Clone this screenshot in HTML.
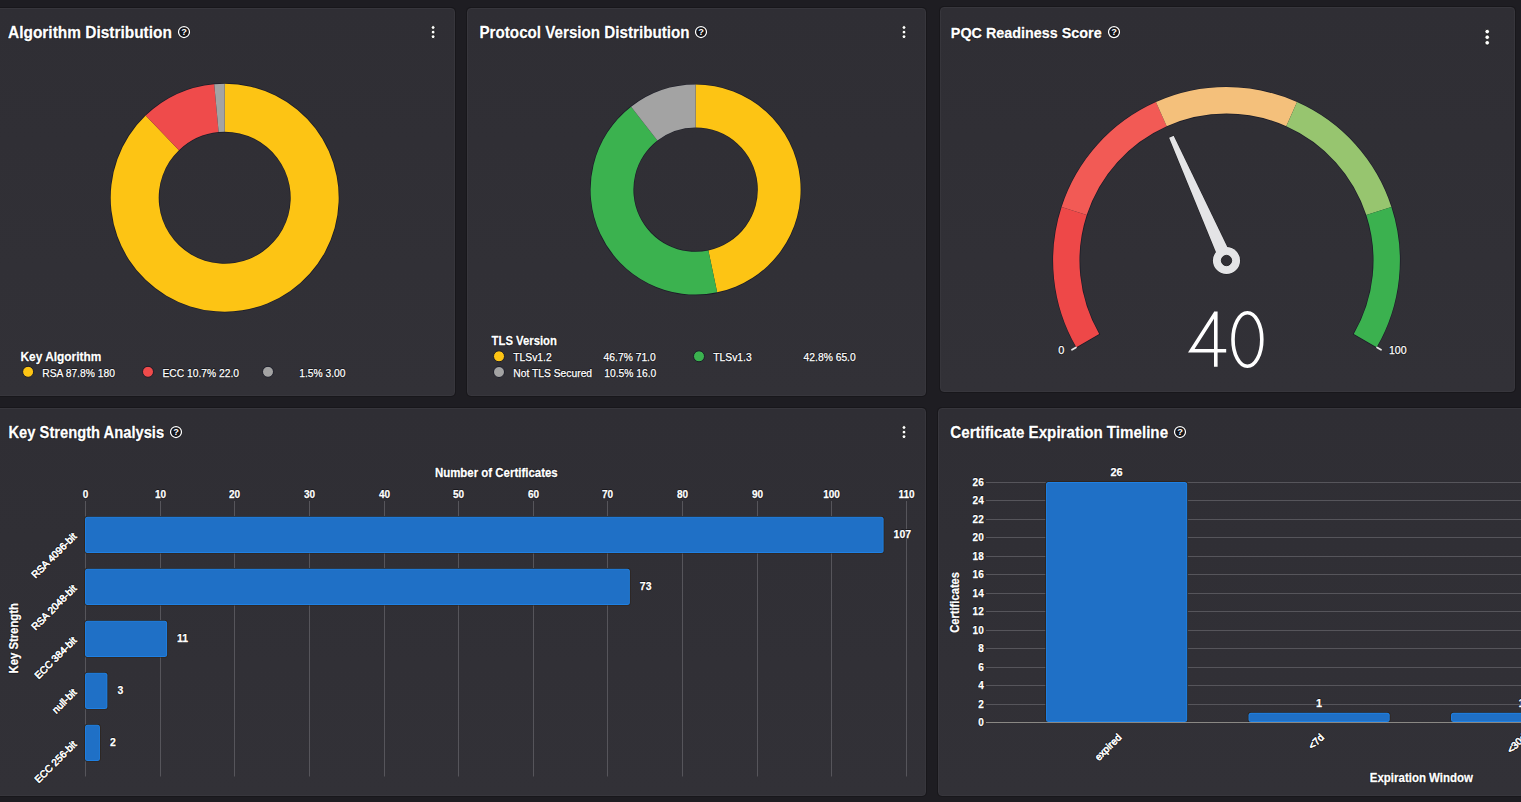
<!DOCTYPE html>
<html><head><meta charset="utf-8"><style>
html,body{margin:0;padding:0;width:1521px;height:802px;overflow:hidden;background:#1e1d22;}
.p{position:absolute;box-sizing:border-box;background:linear-gradient(#2f2e34,#323137);border:1px solid #37363c;border-radius:4px;box-shadow:0 0 0 1px #18171b;}
svg{position:absolute;left:0;top:0;}
text{font-family:"Liberation Sans",sans-serif;stroke:#fff;stroke-width:0.25px;}
text.halo{fill:#141418;stroke:#141418;stroke-width:1.6px;stroke-linejoin:round;}
text.r{stroke-width:0.6px;}
text.halo.r{stroke-width:2px;}
text.q{stroke:none;}
text.halo.q{display:none;}
</style></head><body>
<div class="p" style="left:-10px;top:8px;width:465px;height:388px"></div>
<div class="p" style="left:467px;top:8px;width:459px;height:388px"></div>
<div class="p" style="left:940px;top:7px;width:575px;height:385px"></div>
<div class="p" style="left:-10px;top:408px;width:936px;height:388px"></div>
<div class="p" style="left:938px;top:408px;width:620px;height:388px"></div>
<svg width="1521" height="802" viewBox="0 0 1521 802">
<text transform="translate(8,38) scale(1,1.07)" class="halo " font-size="15.46" font-weight="bold">Algorithm Distribution</text><text transform="translate(8,38) scale(1,1.07)" class="" fill="#fff" font-size="15.46" font-weight="bold">Algorithm Distribution</text>
<circle cx="184" cy="32" r="6.3" fill="#141418"/><circle cx="184" cy="32" r="5.5" fill="#141418" stroke="#fff" stroke-width="1.25"/><text x="184" y="35.3" font-size="9.3" font-weight="bold" fill="#fff" text-anchor="middle" style="stroke:none">?</text>
<circle cx="433.1" cy="27.5" r="1.9" fill="#fff" stroke="#111" stroke-width="0.8"/><circle cx="433.1" cy="32.1" r="1.9" fill="#fff" stroke="#111" stroke-width="0.8"/><circle cx="433.1" cy="36.7" r="1.9" fill="#fff" stroke="#111" stroke-width="0.8"/>
<circle cx="224.7" cy="197.7" r="90" fill="none" stroke="#1b1c28" stroke-width="49.4"/>
<path d="M224.7,83.7 A114,114 0 1 1 145.65,115.56 L178.93,150.15 A66,66 0 1 0 224.7,131.7 Z" fill="#fdc414"/>
<path d="M145.65,115.56 A114,114 0 0 1 214.23,84.18 L218.64,131.98 A66,66 0 0 0 178.93,150.15 Z" fill="#ef4b4b"/>
<path d="M214.23,84.18 A114,114 0 0 1 224.7,83.7 L224.7,131.7 A66,66 0 0 0 218.64,131.98 Z" fill="#a3a3a3"/>
<text transform="translate(20.5,361) scale(1,1.04)" class="halo " font-size="11.9" font-weight="bold">Key Algorithm</text><text transform="translate(20.5,361) scale(1,1.04)" class="" fill="#fff" font-size="11.9" font-weight="bold">Key Algorithm</text>
<circle cx="28.1" cy="371.8" r="5.5" fill="#fdc414" stroke="#1b1c28" stroke-width="1"/>
<text transform="translate(42.2,376.6)" class="halo " font-size="10.3">RSA 87.8% 180</text><text transform="translate(42.2,376.6)" class="" fill="#fff" font-size="10.3">RSA 87.8% 180</text>
<circle cx="148" cy="371.8" r="5.5" fill="#ef4b4b" stroke="#1b1c28" stroke-width="1"/>
<text transform="translate(162.4,376.6)" class="halo " font-size="10.3">ECC 10.7% 22.0</text><text transform="translate(162.4,376.6)" class="" fill="#fff" font-size="10.3">ECC 10.7% 22.0</text>
<circle cx="268" cy="371.8" r="5.5" fill="#a3a3a3" stroke="#1b1c28" stroke-width="1"/>
<text transform="translate(299.2,376.6)" class="halo " font-size="10.3">1.5% 3.00</text><text transform="translate(299.2,376.6)" class="" fill="#fff" font-size="10.3">1.5% 3.00</text>
<text transform="translate(479.5,38) scale(1,1.07)" class="halo " font-size="15.18" font-weight="bold">Protocol Version Distribution</text><text transform="translate(479.5,38) scale(1,1.07)" class="" fill="#fff" font-size="15.18" font-weight="bold">Protocol Version Distribution</text>
<circle cx="701" cy="32" r="6.3" fill="#141418"/><circle cx="701" cy="32" r="5.5" fill="#141418" stroke="#fff" stroke-width="1.25"/><text x="701" y="35.3" font-size="9.3" font-weight="bold" fill="#fff" text-anchor="middle" style="stroke:none">?</text>
<circle cx="904" cy="27.5" r="1.9" fill="#fff" stroke="#111" stroke-width="0.8"/><circle cx="904" cy="32.1" r="1.9" fill="#fff" stroke="#111" stroke-width="0.8"/><circle cx="904" cy="36.7" r="1.9" fill="#fff" stroke="#111" stroke-width="0.8"/>
<circle cx="695.6" cy="189.6" r="83.6" fill="none" stroke="#1b1c28" stroke-width="44.2"/>
<path d="M695.6,84.6 A105,105 0 0 1 717.15,292.37 L708.36,250.48 A62.2,62.2 0 0 0 695.6,127.4 Z" fill="#fdc414"/>
<path d="M717.15,292.37 A105,105 0 0 1 631.11,106.74 L657.4,140.52 A62.2,62.2 0 0 0 708.36,250.48 Z" fill="#3bb24f"/>
<path d="M631.11,106.74 A105,105 0 0 1 695.6,84.6 L695.6,127.4 A62.2,62.2 0 0 0 657.4,140.52 Z" fill="#a3a3a3"/>
<text transform="translate(491.6,344.8) scale(1,1.08)" class="halo " font-size="11.3" font-weight="bold">TLS Version</text><text transform="translate(491.6,344.8) scale(1,1.08)" class="" fill="#fff" font-size="11.3" font-weight="bold">TLS Version</text>
<circle cx="499" cy="356.3" r="5.5" fill="#fdc414" stroke="#1b1c28" stroke-width="1"/>
<text transform="translate(513.3,360.9)" class="halo " font-size="10.3">TLSv1.2</text><text transform="translate(513.3,360.9)" class="" fill="#fff" font-size="10.3">TLSv1.2</text>
<text transform="translate(603.6,360.9)" class="halo " font-size="10.3">46.7% 71.0</text><text transform="translate(603.6,360.9)" class="" fill="#fff" font-size="10.3">46.7% 71.0</text>
<circle cx="699" cy="356.3" r="5.5" fill="#3bb24f" stroke="#1b1c28" stroke-width="1"/>
<text transform="translate(713.3,360.9)" class="halo " font-size="10.3">TLSv1.3</text><text transform="translate(713.3,360.9)" class="" fill="#fff" font-size="10.3">TLSv1.3</text>
<text transform="translate(803.6,360.9)" class="halo " font-size="10.3">42.8% 65.0</text><text transform="translate(803.6,360.9)" class="" fill="#fff" font-size="10.3">42.8% 65.0</text>
<circle cx="499" cy="372" r="5.5" fill="#a3a3a3" stroke="#1b1c28" stroke-width="1"/>
<text transform="translate(513.3,376.6)" class="halo " font-size="10.3">Not TLS Secured</text><text transform="translate(513.3,376.6)" class="" fill="#fff" font-size="10.3">Not TLS Secured</text>
<text transform="translate(604.2,376.6)" class="halo " font-size="10.3">10.5% 16.0</text><text transform="translate(604.2,376.6)" class="" fill="#fff" font-size="10.3">10.5% 16.0</text>
<text transform="translate(950.8,37.6) scale(1,1.07)" class="halo " font-size="14.37" font-weight="bold">PQC Readiness Score</text><text transform="translate(950.8,37.6) scale(1,1.07)" class="" fill="#fff" font-size="14.37" font-weight="bold">PQC Readiness Score</text>
<circle cx="1114" cy="32.1" r="6.3" fill="#141418"/><circle cx="1114" cy="32.1" r="5.5" fill="#141418" stroke="#fff" stroke-width="1.25"/><text x="1114" y="35.4" font-size="9.3" font-weight="bold" fill="#fff" text-anchor="middle" style="stroke:none">?</text>
<circle cx="1487.2" cy="31.6" r="2.3" fill="#fff" stroke="#111" stroke-width="0.8"/><circle cx="1487.2" cy="37.2" r="2.3" fill="#fff" stroke="#111" stroke-width="0.8"/><circle cx="1487.2" cy="42.8" r="2.3" fill="#fff" stroke="#111" stroke-width="0.8"/>
<path d="M1076.18,348.34 A174.1,174.1 0 1 1 1376.82,348.34 L1352.81,334.31 A146.3,146.3 0 1 0 1100.19,334.31 Z" fill="#1b1c28"/>
<path d="M1076.33,347.2 A173.4,173.4 0 0 1 1061.59,206.92 L1086.69,215.07 A147,147 0 0 0 1099.19,334 Z" fill="#ee4848"/>
<path d="M1061.59,206.92 A173.4,173.4 0 0 1 1155.97,102.09 L1166.71,126.21 A147,147 0 0 0 1086.69,215.07 Z" fill="#f25a55"/>
<path d="M1155.97,102.09 A173.4,173.4 0 0 1 1297.03,102.09 L1286.29,126.21 A147,147 0 0 0 1166.71,126.21 Z" fill="#f4c07b"/>
<path d="M1297.03,102.09 A173.4,173.4 0 0 1 1391.41,206.92 L1366.31,215.07 A147,147 0 0 0 1286.29,126.21 Z" fill="#97c56f"/>
<path d="M1391.41,206.92 A173.4,173.4 0 0 1 1376.67,347.2 L1353.81,334 A147,147 0 0 0 1366.31,215.07 Z" fill="#3bb14f"/>
<line x1="1075.9" y1="347.45" x2="1072" y2="349.7" stroke="#e8e8e8" stroke-width="1.8" stroke-linecap="round"/>
<line x1="1377.1" y1="347.45" x2="1381" y2="349.7" stroke="#e8e8e8" stroke-width="1.8" stroke-linecap="round"/>
<path d="M1232.53,257.82 L1173.67,135.7 L1169.1,137.73 L1220.47,263.18 Z" fill="#18181c" stroke="#18181c" stroke-width="1"/>
<circle cx="1226.5" cy="260.5" r="13.6" fill="#18181c" stroke="#18181c" stroke-width="1"/>
<path d="M1232.53,257.82 L1173.67,135.7 L1169.1,137.73 L1220.47,263.18 Z" fill="#e4e4e6"/>
<circle cx="1226.5" cy="260.5" r="13.6" fill="#e4e4e6"/>
<circle cx="1226.5" cy="260.5" r="5.2" fill="#302f35" stroke="#18181c" stroke-width="0.8"/>
<path d="M1215.8,312.5 L1191.3,350.7 L1226.2,350.7 M1215.8,311.5 L1215.8,366.8" fill="none" stroke="#fff" stroke-width="3.6" stroke-linejoin="miter"/>
<ellipse cx="1247.4" cy="339.5" rx="14.4" ry="26.8" fill="none" stroke="#fff" stroke-width="3.6"/>
<text transform="translate(1061.3,353.8)" class="halo " font-size="11" text-anchor="middle">0</text><text transform="translate(1061.3,353.8)" class="" fill="#fff" font-size="11" text-anchor="middle">0</text>
<text transform="translate(1397.8,353.8)" class="halo " font-size="10.6" text-anchor="middle">100</text><text transform="translate(1397.8,353.8)" class="" fill="#fff" font-size="10.6" text-anchor="middle">100</text>
<text transform="translate(8.5,437.6) scale(1,1.07)" class="halo " font-size="14.72" font-weight="bold">Key Strength Analysis</text><text transform="translate(8.5,437.6) scale(1,1.07)" class="" fill="#fff" font-size="14.72" font-weight="bold">Key Strength Analysis</text>
<circle cx="176" cy="432" r="6.3" fill="#141418"/><circle cx="176" cy="432" r="5.5" fill="#141418" stroke="#fff" stroke-width="1.25"/><text x="176" y="435.3" font-size="9.3" font-weight="bold" fill="#fff" text-anchor="middle" style="stroke:none">?</text>
<circle cx="904" cy="427.5" r="1.9" fill="#fff" stroke="#111" stroke-width="0.8"/><circle cx="904" cy="432.1" r="1.9" fill="#fff" stroke="#111" stroke-width="0.8"/><circle cx="904" cy="436.7" r="1.9" fill="#fff" stroke="#111" stroke-width="0.8"/>
<line x1="85.5" y1="501" x2="85.5" y2="776.5" stroke="#56555b" stroke-width="1"/>
<text transform="translate(85.5,498.3)" class="halo " font-size="10" font-weight="bold" text-anchor="middle">0</text><text transform="translate(85.5,498.3)" class="" fill="#fff" font-size="10" font-weight="bold" text-anchor="middle">0</text>
<line x1="160.5" y1="501" x2="160.5" y2="776.5" stroke="#56555b" stroke-width="1"/>
<text transform="translate(160.5,498.3)" class="halo " font-size="10" font-weight="bold" text-anchor="middle">10</text><text transform="translate(160.5,498.3)" class="" fill="#fff" font-size="10" font-weight="bold" text-anchor="middle">10</text>
<line x1="234.5" y1="501" x2="234.5" y2="776.5" stroke="#56555b" stroke-width="1"/>
<text transform="translate(234.5,498.3)" class="halo " font-size="10" font-weight="bold" text-anchor="middle">20</text><text transform="translate(234.5,498.3)" class="" fill="#fff" font-size="10" font-weight="bold" text-anchor="middle">20</text>
<line x1="309.5" y1="501" x2="309.5" y2="776.5" stroke="#56555b" stroke-width="1"/>
<text transform="translate(309.5,498.3)" class="halo " font-size="10" font-weight="bold" text-anchor="middle">30</text><text transform="translate(309.5,498.3)" class="" fill="#fff" font-size="10" font-weight="bold" text-anchor="middle">30</text>
<line x1="384.5" y1="501" x2="384.5" y2="776.5" stroke="#56555b" stroke-width="1"/>
<text transform="translate(384.5,498.3)" class="halo " font-size="10" font-weight="bold" text-anchor="middle">40</text><text transform="translate(384.5,498.3)" class="" fill="#fff" font-size="10" font-weight="bold" text-anchor="middle">40</text>
<line x1="458.5" y1="501" x2="458.5" y2="776.5" stroke="#56555b" stroke-width="1"/>
<text transform="translate(458.5,498.3)" class="halo " font-size="10" font-weight="bold" text-anchor="middle">50</text><text transform="translate(458.5,498.3)" class="" fill="#fff" font-size="10" font-weight="bold" text-anchor="middle">50</text>
<line x1="533.5" y1="501" x2="533.5" y2="776.5" stroke="#56555b" stroke-width="1"/>
<text transform="translate(533.5,498.3)" class="halo " font-size="10" font-weight="bold" text-anchor="middle">60</text><text transform="translate(533.5,498.3)" class="" fill="#fff" font-size="10" font-weight="bold" text-anchor="middle">60</text>
<line x1="607.5" y1="501" x2="607.5" y2="776.5" stroke="#56555b" stroke-width="1"/>
<text transform="translate(607.5,498.3)" class="halo " font-size="10" font-weight="bold" text-anchor="middle">70</text><text transform="translate(607.5,498.3)" class="" fill="#fff" font-size="10" font-weight="bold" text-anchor="middle">70</text>
<line x1="682.5" y1="501" x2="682.5" y2="776.5" stroke="#56555b" stroke-width="1"/>
<text transform="translate(682.5,498.3)" class="halo " font-size="10" font-weight="bold" text-anchor="middle">80</text><text transform="translate(682.5,498.3)" class="" fill="#fff" font-size="10" font-weight="bold" text-anchor="middle">80</text>
<line x1="757.5" y1="501" x2="757.5" y2="776.5" stroke="#56555b" stroke-width="1"/>
<text transform="translate(757.5,498.3)" class="halo " font-size="10" font-weight="bold" text-anchor="middle">90</text><text transform="translate(757.5,498.3)" class="" fill="#fff" font-size="10" font-weight="bold" text-anchor="middle">90</text>
<line x1="831.5" y1="501" x2="831.5" y2="776.5" stroke="#56555b" stroke-width="1"/>
<text transform="translate(831.5,498.3)" class="halo " font-size="10" font-weight="bold" text-anchor="middle">100</text><text transform="translate(831.5,498.3)" class="" fill="#fff" font-size="10" font-weight="bold" text-anchor="middle">100</text>
<line x1="906.5" y1="501" x2="906.5" y2="776.5" stroke="#56555b" stroke-width="1"/>
<text transform="translate(906.5,498.3)" class="halo " font-size="10" font-weight="bold" text-anchor="middle">110</text><text transform="translate(906.5,498.3)" class="" fill="#fff" font-size="10" font-weight="bold" text-anchor="middle">110</text>
<text transform="translate(496.3,476.8) scale(1,1.12)" class="halo " font-size="11.47" font-weight="bold" text-anchor="middle">Number of Certificates</text><text transform="translate(496.3,476.8) scale(1,1.12)" class="" fill="#fff" font-size="11.47" font-weight="bold" text-anchor="middle">Number of Certificates</text>
<rect x="84.3" y="516" width="800.01" height="37.6" rx="3.2" fill="#2e2218"/><rect x="85" y="516.7" width="798.61" height="36.2" rx="2.5" fill="#1f80e3"/><rect x="85.9" y="517.6" width="796.81" height="34.4" rx="1.6" fill="#1f70c6"/>
<text transform="translate(893.61,538.3)" class="halo " font-size="10.5" font-weight="bold">107</text><text transform="translate(893.61,538.3)" class="" fill="#fff" font-size="10.5" font-weight="bold">107</text>
<text transform="translate(77.2,537.1) rotate(-45)" class="halo r" font-size="10" text-anchor="end">RSA 4096-bit</text><text transform="translate(77.2,537.1) rotate(-45)" class="r" fill="#fff" font-size="10" text-anchor="end">RSA 4096-bit</text>
<rect x="84.3" y="568" width="546.25" height="37.6" rx="3.2" fill="#2e2218"/><rect x="85" y="568.7" width="544.85" height="36.2" rx="2.5" fill="#1f80e3"/><rect x="85.9" y="569.6" width="543.05" height="34.4" rx="1.6" fill="#1f70c6"/>
<text transform="translate(639.85,590.3)" class="halo " font-size="10.5" font-weight="bold">73</text><text transform="translate(639.85,590.3)" class="" fill="#fff" font-size="10.5" font-weight="bold">73</text>
<text transform="translate(77.2,589.1) rotate(-45)" class="halo r" font-size="10" text-anchor="end">RSA 2048-bit</text><text transform="translate(77.2,589.1) rotate(-45)" class="r" fill="#fff" font-size="10" text-anchor="end">RSA 2048-bit</text>
<rect x="84.3" y="620" width="83.5" height="37.6" rx="3.2" fill="#2e2218"/><rect x="85" y="620.7" width="82.1" height="36.2" rx="2.5" fill="#1f80e3"/><rect x="85.9" y="621.6" width="80.3" height="34.4" rx="1.6" fill="#1f70c6"/>
<text transform="translate(177.1,642.3)" class="halo " font-size="10.5" font-weight="bold">11</text><text transform="translate(177.1,642.3)" class="" fill="#fff" font-size="10.5" font-weight="bold">11</text>
<text transform="translate(77.2,641.1) rotate(-45)" class="halo r" font-size="10" text-anchor="end">ECC 384-bit</text><text transform="translate(77.2,641.1) rotate(-45)" class="r" fill="#fff" font-size="10" text-anchor="end">ECC 384-bit</text>
<rect x="84.3" y="672" width="23.79" height="37.6" rx="3.2" fill="#2e2218"/><rect x="85" y="672.7" width="22.39" height="36.2" rx="2.5" fill="#1f80e3"/><rect x="85.9" y="673.6" width="20.59" height="34.4" rx="1.6" fill="#1f70c6"/>
<text transform="translate(117.39,694.3)" class="halo " font-size="10.5" font-weight="bold">3</text><text transform="translate(117.39,694.3)" class="" fill="#fff" font-size="10.5" font-weight="bold">3</text>
<text transform="translate(77.2,693.1) rotate(-45)" class="halo r" font-size="10" text-anchor="end">null-bit</text><text transform="translate(77.2,693.1) rotate(-45)" class="r" fill="#fff" font-size="10" text-anchor="end">null-bit</text>
<rect x="84.3" y="724" width="16.33" height="37.6" rx="3.2" fill="#2e2218"/><rect x="85" y="724.7" width="14.93" height="36.2" rx="2.5" fill="#1f80e3"/><rect x="85.9" y="725.6" width="13.13" height="34.4" rx="1.6" fill="#1f70c6"/>
<text transform="translate(109.93,746.3)" class="halo " font-size="10.5" font-weight="bold">2</text><text transform="translate(109.93,746.3)" class="" fill="#fff" font-size="10.5" font-weight="bold">2</text>
<text transform="translate(77.2,745.1) rotate(-45)" class="halo r" font-size="10" text-anchor="end">ECC 256-bit</text><text transform="translate(77.2,745.1) rotate(-45)" class="r" fill="#fff" font-size="10" text-anchor="end">ECC 256-bit</text>
<text transform="translate(18,638.3) rotate(-90) scale(1,1.2)" class="halo " font-size="11.3" font-weight="bold" text-anchor="middle">Key Strength</text><text transform="translate(18,638.3) rotate(-90) scale(1,1.2)" class="" fill="#fff" font-size="11.3" font-weight="bold" text-anchor="middle">Key Strength</text>
<text transform="translate(950.3,438) scale(1,1.07)" class="halo " font-size="15.17" font-weight="bold">Certificate Expiration Timeline</text><text transform="translate(950.3,438) scale(1,1.07)" class="" fill="#fff" font-size="15.17" font-weight="bold">Certificate Expiration Timeline</text>
<circle cx="1180" cy="432" r="6.3" fill="#141418"/><circle cx="1180" cy="432" r="5.5" fill="#141418" stroke="#fff" stroke-width="1.25"/><text x="1180" y="435.3" font-size="9.3" font-weight="bold" fill="#fff" text-anchor="middle" style="stroke:none">?</text>
<line x1="986" y1="722.5" x2="1521" y2="722.5" stroke="#56555b" stroke-width="1"/>
<text transform="translate(983.7,726)" class="halo " font-size="10" font-weight="bold" text-anchor="end">0</text><text transform="translate(983.7,726)" class="" fill="#fff" font-size="10" font-weight="bold" text-anchor="end">0</text>
<line x1="986" y1="704.5" x2="1521" y2="704.5" stroke="#56555b" stroke-width="1"/>
<text transform="translate(983.7,707.54)" class="halo " font-size="10" font-weight="bold" text-anchor="end">2</text><text transform="translate(983.7,707.54)" class="" fill="#fff" font-size="10" font-weight="bold" text-anchor="end">2</text>
<line x1="986" y1="685.5" x2="1521" y2="685.5" stroke="#56555b" stroke-width="1"/>
<text transform="translate(983.7,689.08)" class="halo " font-size="10" font-weight="bold" text-anchor="end">4</text><text transform="translate(983.7,689.08)" class="" fill="#fff" font-size="10" font-weight="bold" text-anchor="end">4</text>
<line x1="986" y1="667.5" x2="1521" y2="667.5" stroke="#56555b" stroke-width="1"/>
<text transform="translate(983.7,670.62)" class="halo " font-size="10" font-weight="bold" text-anchor="end">6</text><text transform="translate(983.7,670.62)" class="" fill="#fff" font-size="10" font-weight="bold" text-anchor="end">6</text>
<line x1="986" y1="648.5" x2="1521" y2="648.5" stroke="#56555b" stroke-width="1"/>
<text transform="translate(983.7,652.15)" class="halo " font-size="10" font-weight="bold" text-anchor="end">8</text><text transform="translate(983.7,652.15)" class="" fill="#fff" font-size="10" font-weight="bold" text-anchor="end">8</text>
<line x1="986" y1="630.5" x2="1521" y2="630.5" stroke="#56555b" stroke-width="1"/>
<text transform="translate(983.7,633.69)" class="halo " font-size="10" font-weight="bold" text-anchor="end">10</text><text transform="translate(983.7,633.69)" class="" fill="#fff" font-size="10" font-weight="bold" text-anchor="end">10</text>
<line x1="986" y1="611.5" x2="1521" y2="611.5" stroke="#56555b" stroke-width="1"/>
<text transform="translate(983.7,615.23)" class="halo " font-size="10" font-weight="bold" text-anchor="end">12</text><text transform="translate(983.7,615.23)" class="" fill="#fff" font-size="10" font-weight="bold" text-anchor="end">12</text>
<line x1="986" y1="593.5" x2="1521" y2="593.5" stroke="#56555b" stroke-width="1"/>
<text transform="translate(983.7,596.77)" class="halo " font-size="10" font-weight="bold" text-anchor="end">14</text><text transform="translate(983.7,596.77)" class="" fill="#fff" font-size="10" font-weight="bold" text-anchor="end">14</text>
<line x1="986" y1="574.5" x2="1521" y2="574.5" stroke="#56555b" stroke-width="1"/>
<text transform="translate(983.7,578.31)" class="halo " font-size="10" font-weight="bold" text-anchor="end">16</text><text transform="translate(983.7,578.31)" class="" fill="#fff" font-size="10" font-weight="bold" text-anchor="end">16</text>
<line x1="986" y1="556.5" x2="1521" y2="556.5" stroke="#56555b" stroke-width="1"/>
<text transform="translate(983.7,559.85)" class="halo " font-size="10" font-weight="bold" text-anchor="end">18</text><text transform="translate(983.7,559.85)" class="" fill="#fff" font-size="10" font-weight="bold" text-anchor="end">18</text>
<line x1="986" y1="537.5" x2="1521" y2="537.5" stroke="#56555b" stroke-width="1"/>
<text transform="translate(983.7,541.38)" class="halo " font-size="10" font-weight="bold" text-anchor="end">20</text><text transform="translate(983.7,541.38)" class="" fill="#fff" font-size="10" font-weight="bold" text-anchor="end">20</text>
<line x1="986" y1="519.5" x2="1521" y2="519.5" stroke="#56555b" stroke-width="1"/>
<text transform="translate(983.7,522.92)" class="halo " font-size="10" font-weight="bold" text-anchor="end">22</text><text transform="translate(983.7,522.92)" class="" fill="#fff" font-size="10" font-weight="bold" text-anchor="end">22</text>
<line x1="986" y1="500.5" x2="1521" y2="500.5" stroke="#56555b" stroke-width="1"/>
<text transform="translate(983.7,504.46)" class="halo " font-size="10" font-weight="bold" text-anchor="end">24</text><text transform="translate(983.7,504.46)" class="" fill="#fff" font-size="10" font-weight="bold" text-anchor="end">24</text>
<line x1="986" y1="482.5" x2="1521" y2="482.5" stroke="#56555b" stroke-width="1"/>
<text transform="translate(983.7,486)" class="halo " font-size="10" font-weight="bold" text-anchor="end">26</text><text transform="translate(983.7,486)" class="" fill="#fff" font-size="10" font-weight="bold" text-anchor="end">26</text>
<rect x="1045.3" y="481.3" width="142.6" height="241.4" rx="3.2" fill="#2e2218"/><rect x="1046" y="482" width="141.2" height="240" rx="2.5" fill="#1f80e3"/><rect x="1046.9" y="482.9" width="139.4" height="238.2" rx="1.6" fill="#1f70c6"/>
<text transform="translate(1116.6,475.9)" class="halo " font-size="11" font-weight="bold" text-anchor="middle">26</text><text transform="translate(1116.6,475.9)" class="" fill="#fff" font-size="11" font-weight="bold" text-anchor="middle">26</text>
<text transform="translate(1122.1,738) rotate(-45)" class="halo r" font-size="10" text-anchor="end">expired</text><text transform="translate(1122.1,738) rotate(-45)" class="r" fill="#fff" font-size="10" text-anchor="end">expired</text>
<rect x="1247.8" y="712.07" width="142.6" height="10.63" rx="3.2" fill="#2e2218"/><rect x="1248.5" y="712.77" width="141.2" height="9.23" rx="2.5" fill="#1f80e3"/><rect x="1249.4" y="713.67" width="139.4" height="7.43" rx="1.6" fill="#1f70c6"/>
<text transform="translate(1319.1,706.67)" class="halo " font-size="11" font-weight="bold" text-anchor="middle">1</text><text transform="translate(1319.1,706.67)" class="" fill="#fff" font-size="11" font-weight="bold" text-anchor="middle">1</text>
<text transform="translate(1324.6,738) rotate(-45)" class="halo r" font-size="10" text-anchor="end">&lt;7d</text><text transform="translate(1324.6,738) rotate(-45)" class="r" fill="#fff" font-size="10" text-anchor="end">&lt;7d</text>
<rect x="1450.3" y="712.07" width="142.6" height="10.63" rx="3.2" fill="#2e2218"/><rect x="1451" y="712.77" width="141.2" height="9.23" rx="2.5" fill="#1f80e3"/><rect x="1451.9" y="713.67" width="139.4" height="7.43" rx="1.6" fill="#1f70c6"/>
<text transform="translate(1521.6,706.67)" class="halo " font-size="11" font-weight="bold" text-anchor="middle">1</text><text transform="translate(1521.6,706.67)" class="" fill="#fff" font-size="11" font-weight="bold" text-anchor="middle">1</text>
<text transform="translate(1527.1,738) rotate(-45)" class="halo r" font-size="10" text-anchor="end">&lt;30d</text><text transform="translate(1527.1,738) rotate(-45)" class="r" fill="#fff" font-size="10" text-anchor="end">&lt;30d</text>
<line x1="986" y1="722.5" x2="1521" y2="722.5" stroke="#8a8884" stroke-width="1"/>
<text transform="translate(959,602.4) rotate(-90) scale(1,1.12)" class="halo " font-size="11.2" font-weight="bold" text-anchor="middle">Certificates</text><text transform="translate(959,602.4) rotate(-90) scale(1,1.12)" class="" fill="#fff" font-size="11.2" font-weight="bold" text-anchor="middle">Certificates</text>
<text transform="translate(1421.4,781.9) scale(1,1.12)" class="halo " font-size="11.5" font-weight="bold" text-anchor="middle">Expiration Window</text><text transform="translate(1421.4,781.9) scale(1,1.12)" class="" fill="#fff" font-size="11.5" font-weight="bold" text-anchor="middle">Expiration Window</text>
</svg>
</body></html>
